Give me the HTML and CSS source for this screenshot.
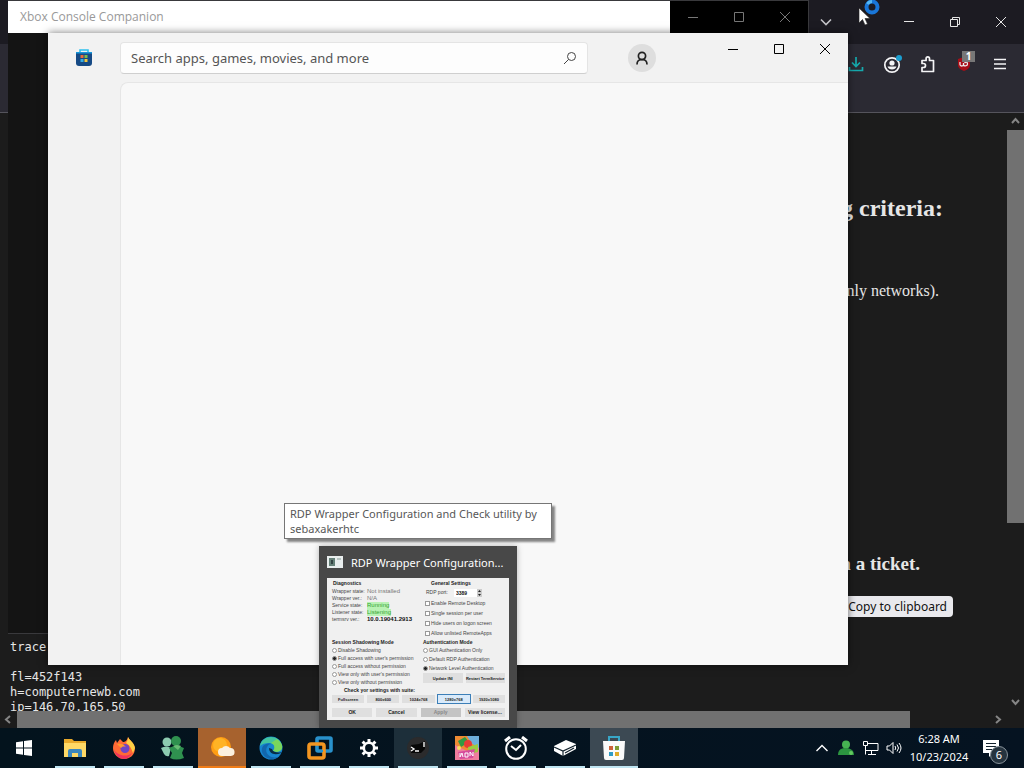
FILE: index.html
```html
<!DOCTYPE html>
<html lang="en">
<head>
<meta charset="utf-8">
<meta name="viewport" content="width=device-width, initial-scale=1">
<title>Desktop</title>
<link rel="stylesheet" href="styles.css">
</head>
<body>
<div class="desktop">
  <section class="browser" aria-label="Web browser">
    <header class="browser-title">
      <button class="tabs-button" aria-label="List all tabs"><svg width="14" height="14" viewBox="0 0 14 14"><path d="M2 4.500l5 5 5-5" stroke="#c4c4c8" stroke-width="1.600"/></svg></button>
      <div class="caption">
        <button aria-label="Minimize browser"><svg width="12" height="12" viewBox="0 0 12 12"><path d="M1 5.500h10"/></svg></button>
        <button aria-label="Restore browser"><svg width="12" height="12" viewBox="0 0 12 12"><path d="M1.500 3.500h7v7h-7zM3.500 3.500v-2h7v7h-2"/></svg></button>
        <button aria-label="Close browser"><svg width="12" height="12" viewBox="0 0 12 12"><path d="M1 1l10 10M11 1L1 11"/></svg></button>
      </div>
    </header>
    <nav class="browser-tools">
      <button aria-label="Downloads"><svg width="16" height="16" viewBox="0 0 16 16"><path d="M8 1v9M4 6.500l4 4 4-4M1.500 11v3.500h13V11" stroke="#16a9ad" stroke-width="1.700"/></svg></button>
      <button aria-label="Account"><svg width="20" height="20" viewBox="0 0 20 20"><circle cx="10" cy="11" r="7.200" stroke="#f4f4f6" stroke-width="1.700"/><circle cx="10" cy="9" r="2.600" fill="#f4f4f6"/><path d="M5.500 12.500h9c-1 4-8 4-9 0z" fill="#f4f4f6"/><circle cx="17" cy="4" r="3" fill="#1b9ed0"/></svg></button>
      <button aria-label="Extensions"><svg width="16" height="18" viewBox="0 0 16 18"><path d="M2 16.500h11.500v-11h-4V3.500a1.700 1.700 0 0 0-3.400 0v2H2v3h1.500a1.700 1.700 0 0 1 0 4H2z" stroke="#f4f4f6" stroke-width="1.700" stroke-linejoin="round"/></svg></button>
      <button class="blocker" aria-label="Content blocker"><svg width="16" height="18" viewBox="0 0 16 18"><path d="M2 4l6-2 6 2v6c0 3-3 5-6 6-3-1-6-3-6-6z" fill="#a80f18"/><path d="M4 7v2.500c0 2 3.500 2 3.500 0V8v1.500c0 2 4 2 4-.5s-2-2-3-1" stroke="#eee" stroke-width="1.300"/></svg><span class="count">1</span></button>
      <button aria-label="Menu"><svg width="14" height="14" viewBox="0 0 14 14"><path d="M1 2.500h12M1 7h12M1 11.500h12" stroke="#f4f4f6" stroke-width="1.500"/></svg></button>
    </nav>
    <div class="viewport">
      <main class="page">
        <h2 class="page-heading">following criteria:</h2>
        <p class="page-text">only networks).</p>
        <h3 class="page-subheading">open a ticket.</h3>
        <button class="copy">Copy to clipboard</button>
        <pre class="trace">trace

fl=452f143
h=computernewb.com
ip=146.70.165.50</pre>
      </main>
      <div class="scroll-y"><svg width="17" height="17" viewBox="0 0 17 17"><path d="M5 10l3.500-4 3.500 4"/></svg><div class="thumb-y"></div><div class="rest-y"></div><svg width="17" height="17" viewBox="0 0 17 17"><path d="M5 6l3.500 4 3.500-4"/></svg></div>
      <div class="scroll-x"><svg width="17" height="17" viewBox="0 0 17 17"><path d="M10 5L6 8.500l4 3.500"/></svg><div class="thumb-x"></div><div class="rest-x"></div><svg width="17" height="17" viewBox="0 0 17 17"><path d="M6 5l4 3.500L6 12"/></svg></div>
    </div>
  </section>

  <section class="xbox" aria-label="Xbox Console Companion">
    <header class="xbox-title">
      <span class="xbox-name">Xbox Console Companion</span>
      <div class="caption">
        <button aria-label="Minimize Xbox"><svg width="12" height="12" viewBox="0 0 12 12"><path d="M1 6.500h10"/></svg></button>
        <button aria-label="Maximize Xbox"><svg width="12" height="12" viewBox="0 0 12 12"><path d="M1.500 1.500h9v9h-9z"/></svg></button>
        <button aria-label="Close Xbox"><svg width="12" height="12" viewBox="0 0 12 12"><path d="M1 1l10 10M11 1L1 11"/></svg></button>
      </div>
    </header>
  </section>

  <section class="store" aria-label="Microsoft Store">
    <header class="store-head">
      <svg class="store-logo" width="18" height="18" viewBox="0 0 18 18"><path d="M5 4V1h8v3" stroke="#2fc1ee" stroke-width="1.600"/><path d="M1 3h16v11q0 3-3 3H4q-3 0-3-3z" fill="#164a85"/><path d="M1 3h16v1.500H1z" fill="#1697db"/><path d="M5.500 6h3v3h-3z" fill="#e66b3d"/><path d="M9.500 6h3v3h-3z" fill="#7dbd4b"/><path d="M5.500 10h3v3h-3z" fill="#35aee5"/><path d="M9.500 10h3v3h-3z" fill="#f3c63d"/></svg>
      <form class="search">
        <input type="text" aria-label="Search" placeholder="Search apps, games, movies, and more">
        <button type="button" aria-label="Run search"><svg width="14" height="14" viewBox="0 0 14 14"><circle cx="8.500" cy="5.500" r="4" stroke="#444"/><path d="M5.500 8.500L1 13" stroke="#444"/></svg></button>
      </form>
      <button class="avatar" aria-label="Profile"><svg width="14" height="14" viewBox="0 0 14 14"><circle cx="7" cy="5" r="3.600" stroke="#222" stroke-width="1.700"/><path d="M2 13.500C2 10.500 4 8.500 7 8.500s5 2 5 5" stroke="#222" stroke-width="1.700"/></svg></button>
      <div class="caption">
        <button aria-label="Minimize Store"><svg width="12" height="12" viewBox="0 0 12 12"><path d="M1 6.500h10"/></svg></button>
        <button aria-label="Maximize Store"><svg width="12" height="12" viewBox="0 0 12 12"><path d="M1.500 1.500h9v9h-9z"/></svg></button>
        <button aria-label="Close Store"><svg width="12" height="12" viewBox="0 0 12 12"><path d="M1 1l10 10M11 1L1 11"/></svg></button>
      </div>
    </header>
    <div class="store-pane"></div>
  </section>

  <div class="tooltip" role="tooltip">RDP Wrapper Configuration and Check utility by sebaxakerhtc</div>

  <section class="preview" aria-label="Window preview">
    <header class="preview-head">
      <svg width="16" height="12" viewBox="0 0 16 12"><path d="M0 0h16v12H0z" fill="#e9eeee"/><path d="M2 2h6v8H2z" fill="#658078"/><path d="M4 4h2v4H4z" fill="#344"/><path d="M10 2h4v2h-4z" fill="#b6c4c2"/></svg>
      <span>RDP Wrapper Configuration...</span>
    </header>
    <div class="mini">
      <div class="mini-cols">
        <div class="mini-top">
          <b class="mini-title">Diagnostics</b>
          <dl>
            <dt>Wrapper state:</dt><dd class="dim">Not installed</dd>
            <dt>Wrapper ver.:</dt><dd class="dim">N/A</dd>
            <dt>Service state:</dt><dd class="ok">Running</dd>
            <dt>Listener state:</dt><dd class="ok">Listening</dd>
            <dt>termsrv ver.:</dt><dd class="strong">10.0.19041.2913</dd>
          </dl>
        </div>
        <div class="mini-top general">
          <b class="mini-title indent">General Settings</b>
          <label class="port">RDP port: <input type="text" value="3389"><svg width="5" height="8" viewBox="0 0 5 8"><path d="M0 0h5v8H0z" fill="#ccc"/><path d="M1 3l1.500-2L4 3zM1 5l1.500 2L4 5z" fill="#222"/></svg></label>
          <label><input type="checkbox">Enable Remote Desktop</label>
          <label><input type="checkbox">Single session per user</label>
          <label><input type="checkbox">Hide users on logon screen</label>
          <label><input type="checkbox">Allow unlisted RemoteApps</label>
        </div>
        <div class="mini-modes">
          <b>Session Shadowing Mode</b>
          <label><input type="radio" name="shadow">Disable Shadowing</label>
          <label><input type="radio" name="shadow" checked>Full access with user's permission</label>
          <label><input type="radio" name="shadow">Full access without permission</label>
          <label><input type="radio" name="shadow">View only with user's permission</label>
          <label><input type="radio" name="shadow">View only without permission</label>
        </div>
        <div class="mini-modes auth">
          <b>Authentication Mode</b>
          <label><input type="radio" name="auth">GUI Authentication Only</label>
          <label><input type="radio" name="auth">Default RDP Authentication</label>
          <label><input type="radio" name="auth" checked>Network Level Authentication</label>
          <div class="mini-pair"><button>Update INI</button><button>Restart TermService</button></div>
        </div>
      </div>
      <b class="mini-check">Check yor settings with suite:</b>
      <div class="mini-sizes"><button>Fullscreen</button><button>800x600</button><button>1024x768</button><button class="picked">1280x768</button><button>1920x1080</button></div>
      <div class="mini-actions"><button>OK</button><button>Cancel</button><button disabled>Apply</button><button>View license...</button></div>
    </div>
  </section>

  <div class="cursor">
    <svg width="24" height="28" viewBox="0 0 24 28"><circle cx="14" cy="7" r="5.500" stroke="#1976d8" stroke-width="4"/><path d="M9.500 4A5.500 5.500 0 0 1 14 1.500" stroke="#54b7f3" stroke-width="3"/><path d="M1 8v15l3.500-3.500L7 25l2.500-1-2.500-5.500h5z" fill="#fff" stroke="#222" stroke-width=".6"/></svg>
  </div>
</div>

<footer class="taskbar">
  <button class="start" aria-label="Start"><svg width="16" height="16" viewBox="0 0 16 16"><path fill="#fff" d="M0 2.300L7 1.300V7.500H0zM8 1.100L16 0V7.500H8zM0 8.500H7V14.700L0 13.700zM8 8.500H16V16L8 14.900z"/></svg></button>
  <div class="apps">
    <button class="app" aria-label="File Explorer"><svg width="24" height="24" viewBox="0 0 24 24"><path d="M1 3h8l2 2h12v16H1z" fill="#e9aa2b"/><path d="M1 7h22v14H1z" fill="#ffd966"/><path d="M5 21v-6q0-2 2-2h10q2 0 2 2v6h-4v-4H9v4z" fill="#3c87bd"/></svg></button>
    <button class="app" aria-label="Firefox"><svg width="24" height="24" viewBox="0 0 24 24"><path d="M16 1c1 3 6 5 7 11 0 7-5 11-11 11S1 18 1 12c0-3 1-6 3-8l1 3 3-4 3 3c2 0 4-1 5-5z" fill="#ff6a35"/><path d="M16 1c1 3 6 5 7 11l-2 5c-2-6-4-8-7-10 1-2 2-3 2-6z" fill="#ffd044"/><path d="M2 13c2 6 12 9 18 4-2 4-5 6-8 6-5 0-9-4-10-10z" fill="#f0335d"/><circle cx="13" cy="12.500" r="4.500" fill="#7145c4"/><path d="M5 8c4-1 7 0 9 3-3-1-4 0-5 1z" fill="#ff982f"/></svg></button>
    <button class="app" aria-label="Messenger"><svg width="24" height="24" viewBox="0 0 24 24"><g fill="#8dcbb0"><circle cx="6" cy="6" r="4.500"/><path d="M0 12q5-3 10 0l-2 8q-3 1-5-2z"/></g><g fill="#2f914f"><circle cx="15" cy="5" r="5"/><path d="M8 12q7-4 15 0l-2 5 2 5q-8 3-14 0l2-5z"/></g><path d="M12 10q4-2 8 0l-3 4z" fill="#68bd74"/></svg></button>
    <button class="app weather" aria-label="Weather"><svg width="26" height="24" viewBox="0 0 26 24"><circle cx="12" cy="11" r="10" fill="#ff9d13"/><circle cx="11" cy="9" r="7" fill="#ffb325"/><path d="M13 20a4 4 0 0 1 0-8 5 5 0 0 1 8 0 4 4 0 0 1 1 8z" fill="#fbf0df"/></svg></button>
    <button class="app" aria-label="Edge"><svg width="24" height="24" viewBox="0 0 24 24"><circle cx="12" cy="12" r="11.500" fill="#1785cf"/><path d="M1 10C3-2 21-2 23 10c1 5-5 7-9 5 3-4 1-8-4-8-4 0-7 1-9 3z" fill="#42c49f"/><path d="M18 3c7 5 7 12 0 13l-4-1c3-4 1-7-2-8z" fill="#79d65d"/><path d="M8 11c-3 6 3 12 11 10-9 6-20-3-15-11 2-2 5-3 8-2-2 0-3 1-4 3z" fill="#1266ad"/><path d="M10 12c0 5 5 8 12 5l1-1c-3 1-9 1-10-3z" fill="#082d45"/></svg></button>
    <button class="app" aria-label="Virtual machines"><svg width="26" height="24" viewBox="0 0 26 24" stroke-width="3.600"><rect x="10" y="2" width="14" height="13" rx="1" stroke="#2991cb"/><rect x="2" y="8" width="15" height="14" rx="2" stroke="#f39520"/><path d="M10 10v5h6" stroke="#2991cb" stroke-width="2"/></svg></button>
    <button class="app" aria-label="Settings"><svg width="20" height="20" viewBox="0 0 20 20"><circle cx="10" cy="10" r="5.200" stroke="#fff" stroke-width="2.600"/><path d="M10 4V1M10 19v-3M4 10H1M19 10h-3M5.800 5.800L3.600 3.600M16.400 16.400l-2.200-2.200M5.800 14.200l-2.200 2.200M16.400 3.600l-2.200 2.200" stroke="#fff" stroke-width="3"/></svg></button>
    <button class="app lit" aria-label="RDP Wrapper"><svg width="24" height="24" viewBox="0 0 24 24"><circle cx="12" cy="12" r="11" fill="#2b2b2c"/><path d="M5 9l8-1 6-3v8l-4 4H5z" fill="#080808"/><path d="M5 11l3 2-3 2M9 15h4M18 6v5" stroke="#f3f3f3" stroke-width="1.400"/></svg></button>
    <button class="app" aria-label="Game"><svg width="24" height="24" viewBox="0 0 24 24"><path d="M0 0h24v24H0z" fill="#ef7c9d"/><path d="M0 0h24v11L12 15 0 9z" fill="#ee8c34"/><path d="M12 0h12v12l-8-5z" fill="#6eafdb"/><path d="M3 5l7-4 4 5-8 5z" fill="#319b43"/><circle cx="13" cy="8" r="4" fill="#e73b36"/><path d="M13 11l10-3v8l-9 2z" fill="#9acb43"/><path d="M3 16l17-3-2 9-13 1z" fill="#d64b9c"/><path d="M5 17v4l2-4 1 4M10 17v4h3v-4zM15 20v-4l3 4v-4" stroke="#fff"/><circle cx="4" cy="12" r="2" fill="#f8e060"/></svg></button>
    <button class="app" aria-label="Alarms and Clock"><svg width="24" height="24" viewBox="0 0 24 24"><path d="M1 5l5-4M18 1l5 4" stroke="#fff" stroke-width="3"/><circle cx="12" cy="13" r="9.800" stroke="#fff" stroke-width="2"/><path d="M7 10l5 4 5-5" stroke="#fff" stroke-width="2"/></svg></button>
    <button class="app" aria-label="Console"><svg width="24" height="16" viewBox="0 0 24 16"><path d="M1 6L13 0l10 4v5l-13 7-9-5z" fill="#fff"/><path d="M1 7l9 4 13-6M10 11v5M12 13l9-5" stroke="#10202b" stroke-width="1.200"/></svg></button>
    <button class="app active" aria-label="Microsoft Store"><svg width="24" height="24" viewBox="0 0 24 24"><path d="M7 6V1h10v5" stroke="#38a7c8" stroke-width="2"/><path d="M1 5h22l-1 17q0 2-2 2H4q-2 0-2-2z" fill="#fafafa"/><path d="M7 10h4v4H7z" fill="#cc623a"/><path d="M13 10h4v4h-4z" fill="#7c9d36"/><path d="M7 16h4v4H7z" fill="#2f9bc4"/><path d="M13 16h4v4h-4z" fill="#e0ab28"/></svg></button>
  </div>
  <div class="tray">
    <button aria-label="Show hidden icons"><svg width="14" height="14" viewBox="0 0 14 14"><path d="M1.500 10L7 4.500 12.500 10" stroke="#fff" stroke-width="1.400"/></svg></button>
    <button aria-label="Messenger status"><svg width="16" height="16" viewBox="0 0 16 16"><circle cx="8" cy="4.500" r="4" fill="#46b252"/><path d="M0 15c0-6 4-7 8-7s8 2 8 7z" fill="#2c9440"/><circle cx="13" cy="13" r="2" fill="#62c85e"/></svg></button>
    <button aria-label="Network"><svg width="17" height="16" viewBox="0 0 17 16"><path d="M5 3.500h11v7H4M9.500 11v3M6 14.500h8M1.500 1.500h4v4h-4zM3.500 6v8.500" stroke="#fff"/></svg></button>
    <button aria-label="Volume"><svg width="16" height="14" viewBox="0 0 16 14"><path d="M1 5h2.500L7 1.500v11L3.500 9H1zM9 5q1.500 2 0 4M11 3.500q3 3.500 0 7M13 2q4 5 0 10" stroke="#fff"/></svg></button>
  </div>
  <time class="clock" datetime="2024-10-23T06:28"><span>6:28 AM</span><span>10/23/2024</span></time>
  <button class="notices" aria-label="Notifications"><svg width="16" height="17" viewBox="0 0 16 17"><path d="M0 0h16v13h-6l-4 4v-4H0z" fill="#fff"/><path d="M3 3.500h10M3 6.500h10M3 9.500h6" stroke="#14232e"/></svg><span class="badge">6</span></button>
</footer>
</body>
</html>
```

FILE: styles.css
```css
* { box-sizing: border-box; }

html, body { height: 100%; margin: 0; }

body {
  display: flex;
  flex-direction: column;
  overflow: hidden;
  background: #1c1c1c;
  font-family: "Noto Sans", "Open Sans", sans-serif;
  font-size: 12px;
}

button, input { font: inherit; color: inherit; margin: 0; }
button { padding: 0; border: 0; background: none; display: flex; align-items: center; justify-content: center; }
svg { fill: none; flex: none; display: block; }

.desktop { flex: 1; min-height: 0; position: relative; overflow: hidden; }

.caption { display: flex; }
.caption button { width: 46px; height: 32px; }
.caption path { stroke: currentColor; }

/* Browser */
.browser { height: 100%; display: flex; flex-direction: column; color: #e6e6e6; }
.browser-title { height: 44px; display: flex; align-items: center; justify-content: flex-end; background: #1c1b22; flex: none; }
.tabs-button { width: 30px; height: 32px; margin-right: 45px; }
.browser-tools {
  height: 69px;
  flex: none;
  display: flex;
  justify-content: flex-end;
  gap: 4px;
  padding: 4px 8px 33px;
  background: #2b2a33;
  border-bottom: 1px solid #55545c;
}
.browser-tools button { width: 32px; }
.blocker { position: relative; }
.count { position: absolute; top: 3px; right: 5px; width: 13px; background: #777; color: #fff; font-size: 10px; line-height: 11px; font-weight: 700; }

.viewport { flex: 1; min-height: 0; display: grid; grid-template: minmax(0, 1fr) 17px / minmax(0, 1fr) 17px; background: #1c1c1c; }
.page { overflow: hidden; display: flex; flex-direction: column; align-items: flex-end; font-family: "Liberation Serif", serif; }
.page > * { flex: none; }
.page-heading { margin: 81px 64px 0 0; font-size: 24px; line-height: 28px; }
.page-text { margin: 60px 68px 0 0; font-size: 16px; line-height: 18px; }
.page-subheading { margin: 253px 87px 0 0; font-size: 19px; line-height: 22px; }
.copy { margin: 21px 54px 0 0; padding: 0 6px; height: 21px; border-radius: 4px; background: #e9e9ed; color: #111; font-family: "Noto Sans", sans-serif; font-size: 12px; }
.trace { align-self: flex-start; margin: 23px 0 0 10px; font-family: "DejaVu Sans Mono", monospace; font-size: 12px; line-height: 15px; }

.scroll-y { grid-row: 1 / 3; grid-column: 2; display: flex; flex-direction: column; padding-bottom: 17px; }
.scroll-x { grid-row: 2; grid-column: 1; display: flex; }
.scroll-y path, .scroll-x path { stroke: #858585; stroke-width: 2; }
.thumb-y, .thumb-x { background: #717171; }
.thumb-y { flex: 393; }
.rest-y { flex: 171; }
.thumb-x { flex: 893; }
.rest-x { flex: 80; }

/* Xbox window */
.xbox { position: absolute; left: 8px; top: 0; width: 801px; height: 634px; background: #141414; border: 1px solid #39393c; border-left: 0; }
.xbox-title { display: flex; height: 32px; background: #000; color: #777; }
.xbox-name { flex: 1; padding-left: 12px; line-height: 32px; background: #fff; color: #999; font-family: "Open Sans", sans-serif; }

/* Store window */
.store { position: absolute; left: 48px; top: 33px; width: 800px; height: 632px; display: flex; flex-direction: column; background: #f2f2f2; color: #000; box-shadow: 0 0 8px #0008; }
.store-head { height: 49px; flex: none; display: flex; align-items: center; }
.store-logo { margin: 0 27px; }
.search { width: 468px; height: 32px; display: flex; background: #fdfdfd; border: 1px solid #e4e4e4; border-bottom-color: #cfcfcf; border-radius: 4px; }
.search input { flex: 1; min-width: 0; border: 0; outline: 0; padding: 0 10px; background: none; font-size: 13px; }
.search input::placeholder { color: #555; opacity: 1; }
.search button { width: 34px; }
.avatar { width: 28px; height: 28px; margin-left: 40px; border-radius: 50%; background: #dedede; }
.store .caption { margin-left: auto; align-self: flex-start; }
.store-pane { flex: 1; margin-left: 72px; background: #f8f8f8; border: 1px solid #e6e6e6; border-width: 1px 0 0 1px; border-top-left-radius: 8px; }

/* Tooltip and thumbnail */
.tooltip { position: absolute; left: 284px; top: 503px; width: 268px; padding: 2px 5px; background: #fff; border: 1px solid #767676; box-shadow: 3px 3px 2px #0007; color: #575757; font-size: 11px; line-height: 15px; }
.preview { position: absolute; left: 319px; bottom: 0; width: 198px; padding: 0 8px 8px; background: #484848; box-shadow: 0 0 6px #0004; }
.preview-head { height: 32px; display: flex; align-items: center; gap: 8px; color: #fff; font-size: 11px; white-space: nowrap; }

.mini { height: 142px; padding: 2px 4px 3px 5px; background: #f0f0f0; color: #444; font-family: "Liberation Sans", Arial, sans-serif; font-size: 5px; line-height: 7px; white-space: nowrap; }
.mini b { color: #222; display: block; }
.mini-cols { display: grid; grid-template-columns: 91px 1fr; }
.mini-top { height: 59px; }
.mini-title { padding-left: 1px; }
.mini-title.indent { padding-left: 6px; }
.mini dl { margin: 1px 0 0; display: grid; grid-template-columns: 35px 1fr; }
.mini dd { margin: 0; font-size: 6px; }
.dim { color: #777; }
.ok { color: #35a435; justify-self: start; background: #b9f2b4; }
.strong { color: #111; font-weight: 700; }
.mini label { display: flex; align-items: center; gap: 1px; }
.mini input[type="radio"], .mini input[type="checkbox"] { appearance: none; width: 5px; height: 5px; border: 1px solid #999; background: #fff; }
.mini input[type="radio"] { border-radius: 50%; }
.mini input[type="radio"]:checked { background: #222; }
.general { padding-left: 2px; }
.general label { height: 10px; }
.general .port { height: 11px; gap: 0; padding-left: 1px; }
.port input { width: 23px; height: 8px; margin-left: 6px; padding: 0 2px; border: 0; background: #fff; color: #111; font-weight: 700; font-size: 5px; }
.mini-modes { height: 48px; }
.mini-modes label { height: 8px; }
.auth label { height: 9px; }
.mini button { flex: 1; background: #dfdfdf; color: #222; font-weight: 700; font-size: 5px; line-height: 7px; }
.mini-pair { display: flex; gap: 3px; }
.mini-pair button { height: 10px; font-size: 4px; }
.mini .mini-check { padding-left: 12px; }
.mini-sizes { display: flex; gap: 3px; margin-top: 1px; }
.mini-sizes button { height: 8px; font-size: 4px; }
.mini-sizes .picked { background: #d9eafa; box-shadow: 0 0 0 1px #3c7fb8; }
.mini-actions { display: flex; gap: 4px; margin-top: 5px; }
.mini-actions button { height: 9px; }
.mini-actions button:disabled { background: #c4c4c4; color: #888; }

.cursor { position: absolute; left: 858px; top: 0; }

/* Taskbar */
.taskbar { height: 40px; flex: none; display: flex; background: linear-gradient(90deg, #03131d, #051321); color: #fff; }
.start { width: 48px; }
.apps { display: flex; gap: 1px; margin-left: 3px; }
.app { width: 48px; position: relative; }
.app::after { content: ""; position: absolute; left: 4px; right: 4px; bottom: 0; height: 2px; background: #bfe5f2; }
.weather { background: #a7622e; }
.weather::after { left: 0; right: 0; background: #f07d18; }
.lit { background: #1d2f3a; }
.active { background: #3c4953; }
.active::after { left: 0; right: 0; }
.tray { display: flex; margin-left: auto; }
.tray button { width: 24px; }
.clock { width: 66px; display: flex; flex-direction: column; justify-content: center; text-align: center; font-size: 11px; line-height: 18px; white-space: nowrap; }
.notices { width: 52px; position: relative; padding-right: 14px; }
.badge { position: absolute; left: 18px; top: 18px; width: 18px; height: 18px; border: 1px solid #87929a; border-radius: 50%; background: #26343f; font-size: 11px; line-height: 15px; text-align: center; }
```
